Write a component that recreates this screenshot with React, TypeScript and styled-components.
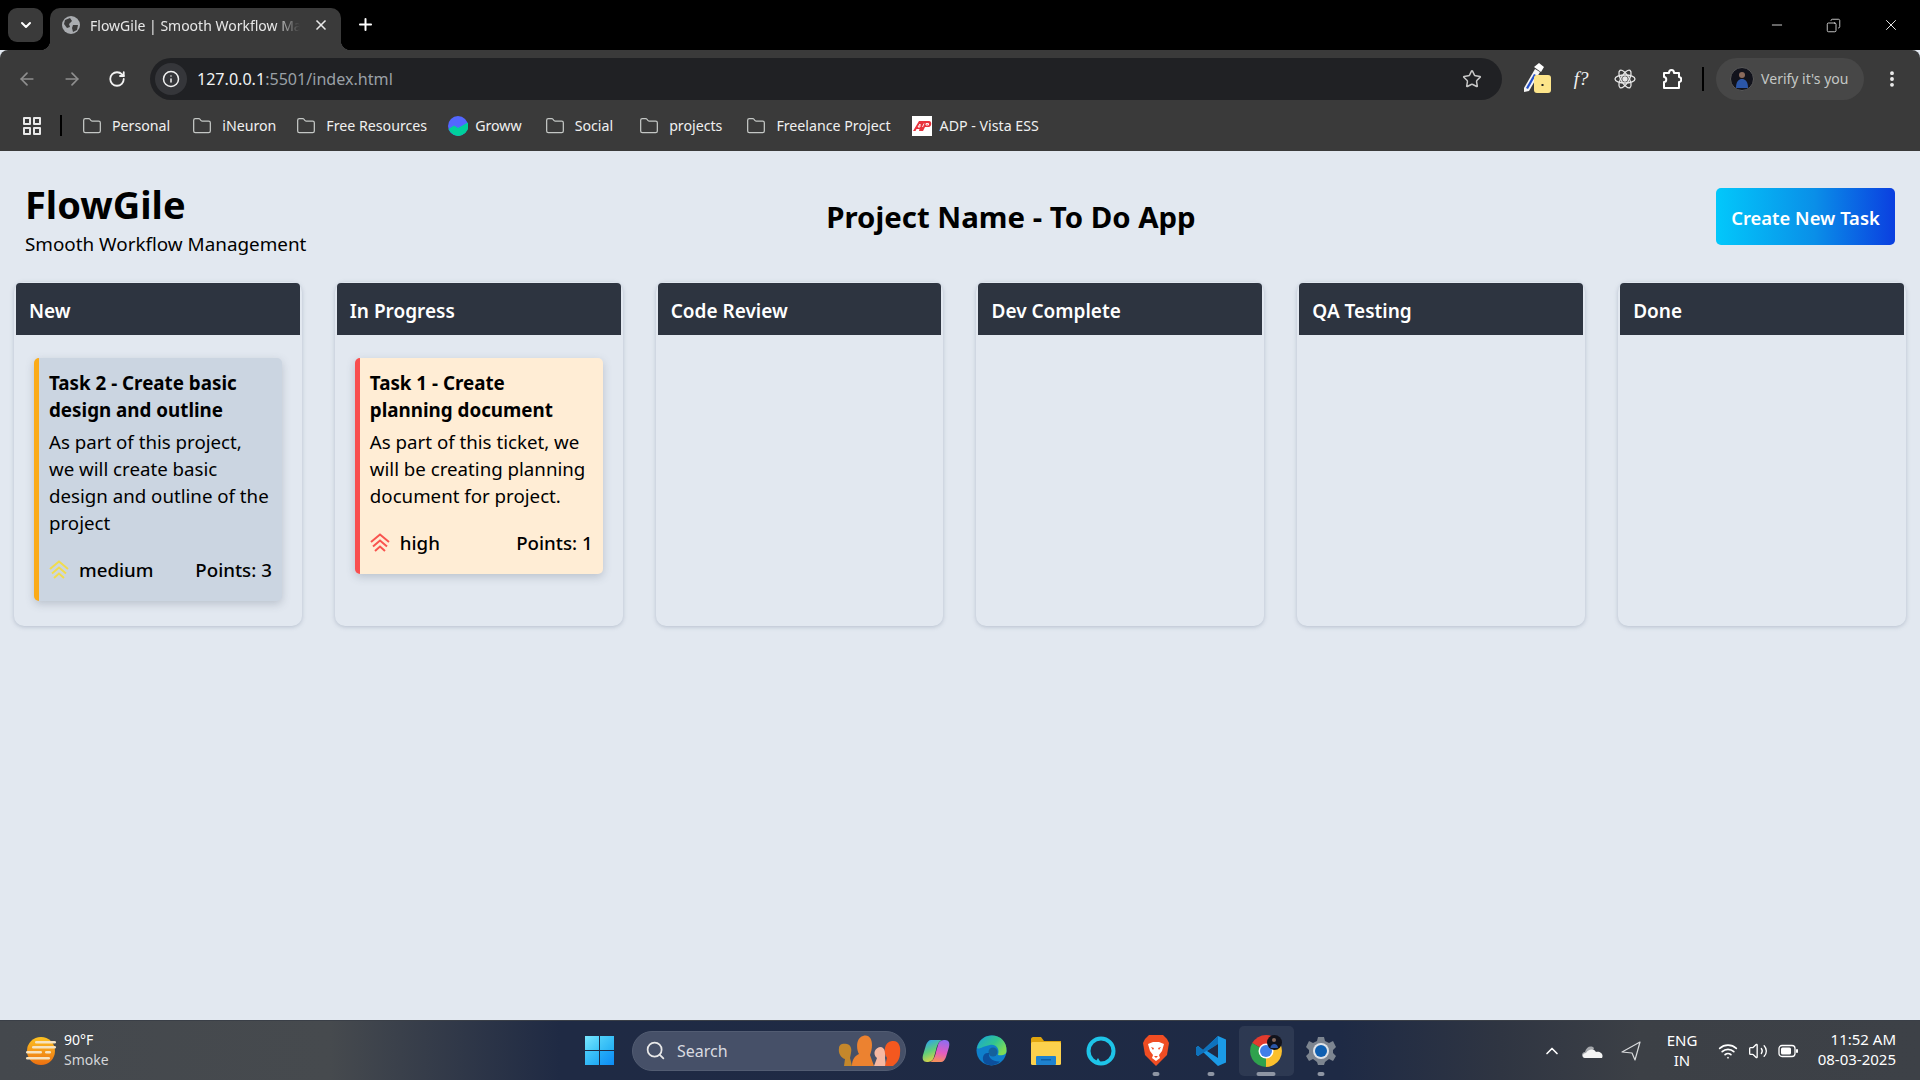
import {createGlobalStyle, styled} from 'styled-components';
import {
  ArrowLeft,
  ArrowRight,
  ChevronDown,
  ChevronUp,
  Copy,
  EllipsisVertical,
  Folder,
  Info,
  Minus,
  Plus,
  RotateCw,
  Search,
  Star,
  Volume2,
  Wifi,
  X,
} from 'lucide-react';

const GlobalStyle = createGlobalStyle`
  html, body {
    margin: 0;
    padding: 0;
    height: 100%;
    overflow: hidden;
    background: #e2e8f0;
    font-family: "Noto Sans", "Open Sans", sans-serif;
  }
  * { box-sizing: border-box; }
  h1, h2, h3, p { margin: 0; }
`;

const Screen = styled.div`
  width: 1920px;
  height: 1080px;
  display: flex;
  flex-direction: column;
`;

/* browser chrome */

const TabStrip = styled.div`
  height: 50px;
  background: #000;
  display: flex;
  align-items: flex-end;
  padding: 0 0 0 8px;
  color: #fff;
`;

const TabSearch = styled.div`
  width: 35px;
  height: 34px;
  margin-bottom: 8px;
  border-radius: 9px;
  background: #3a3a3a;
  display: flex;
  align-items: center;
  justify-content: center;
`;

const Tab = styled.div`
  position: relative;
  margin-left: 7px;
  width: 291px;
  height: 42px;
  background: #3a3a3a;
  border-radius: 10px 10px 0 0;
  display: flex;
  align-items: center;
  padding: 0 12px 8px 12px;
  font-size: 14px;
  color: #e8e8e8;

  &::before,
  &::after {
    content: '';
    position: absolute;
    bottom: 0;
    width: 10px;
    height: 10px;
  }
  &::before {
    left: -10px;
    background: radial-gradient(circle at 0 0, #000 10px, #3a3a3a 10.5px);
  }
  &::after {
    right: -10px;
    background: radial-gradient(circle at 100% 0, #000 10px, #3a3a3a 10.5px);
  }
`;

const TabTitle = styled.span`
  margin-left: 10px;
  width: 210px;
  white-space: nowrap;
  overflow: hidden;
  -webkit-mask-image: linear-gradient(to right, #000 88%, transparent 100%);
  mask-image: linear-gradient(to right, #000 88%, transparent 100%);
`;

const TabClose = styled.span`
  margin-left: auto;
  display: flex;
`;

const NewTab = styled.span`
  margin: 0 0 9px 15px;
  height: 34px;
  display: flex;
  align-items: center;
`;

const WindowControls = styled.div`
  margin-left: auto;
  height: 50px;
  display: flex;
  align-items: center;
  padding-right: 20px;
  gap: 41px;
`;

const Toolbar = styled.div`
  height: 50px;
  background: #3a3a3a;
  border-radius: 8px 8px 0 0;
  display: flex;
  align-items: flex-end;
  padding-left: 16px;
  color: #9a9a9a;
`;

const NavButton = styled.span<{$on?: boolean}>`
  width: 22px;
  height: 42px;
  margin-right: 23px;
  display: flex;
  align-items: center;
  justify-content: center;
  color: ${p => (p.$on ? '#f2f2f2' : '#8f8f8f')};
`;

const Omnibox = styled.div`
  margin-left: -1px;
  width: 1353px;
  height: 42px;
  background: #202124;
  border-radius: 21px;
  display: flex;
  align-items: center;
  padding: 0 20px 1px 5px;
  font-size: 16.1px;
  color: #9aa0a6;
`;

const SiteInfo = styled.span`
  width: 32px;
  height: 32px;
  border-radius: 50%;
  background: #35363a;
  color: #f1f1f1;
  display: flex;
  align-items: center;
  justify-content: center;
  margin-right: 10px;
`;

const Host = styled.span`
  color: #f1f3f4;
`;

const StarBox = styled.span`
  margin-left: auto;
  display: flex;
  color: #c7c7c7;
`;

const ExtensionTray = styled.div`
  height: 42px;
  display: flex;
  align-items: center;
  margin-left: 21px;
  color: #f1f1f1;
`;

const ExtIcon = styled.span<{$w: number}>`
  width: ${p => p.$w}px;
  display: flex;
  justify-content: center;
`;

const FormulaIcon = styled.span`
  font-family: "Liberation Serif", serif;
  font-style: italic;
  font-size: 19px;
`;

const MenuButton = styled(ExtIcon)`
  height: 42px;
  align-items: center;
`;

const TrayDivider = styled.span<{$h?: number}>`
  width: 2px;
  height: ${p => p.$h ?? 24}px;
  background: #000;
`;

const Profile = styled.div`
  margin-left: 12px;
  width: 148px;
  height: 42px;
  border-radius: 21px;
  background: #474747;
  display: flex;
  align-items: center;
  padding: 0 0 1px 14px;
  gap: 7px;
  font-size: 14px;
  color: #c4c7c5;
  white-space: nowrap;
`;

const BookmarkBar = styled.div`
  height: 51px;
  background: #3a3a3a;
  display: flex;
  align-items: center;
  padding-left: 23px;
  font-size: 14.2px;
  color: #f0f0f0;
  white-space: nowrap;
`;

const Bookmark = styled.span<{$gap?: number; $iconGap?: number}>`
  display: flex;
  align-items: center;
  gap: ${p => p.$iconGap ?? 10}px;
  margin-right: ${p => p.$gap ?? 23}px;
  color: #f0f0f0;
`;

const AppsIcon = styled.span`
  width: 18px;
  height: 18px;
  display: grid;
  grid-template-columns: 8px 8px;
  gap: 2px;
  margin-right: 19px;

  i {
    border: 2px solid #e8e8e8;
    border-radius: 1px;
  }
`;

const BookmarkDivider = styled(TrayDivider)`
  margin-right: 20px;
`;

/* page */

const Page = styled.main`
  flex: 1;
  background: #e2e8f0;
  color: #000;
  min-height: 0;
`;

const PageHeader = styled.header`
  height: 131px;
  display: grid;
  grid-template-columns: 1fr auto 1fr;
  align-items: start;
  padding: 29px 25px 0 25px;
`;

const Brand = styled.div`
  display: flex;
  flex-direction: column;
`;

const BrandName = styled.h1`
  font-size: 38px;
  line-height: 48px;
  font-weight: 700;
`;

const Tagline = styled.p`
  font-size: 18.85px;
  line-height: 26px;
  margin-top: 3px;
`;

const ProjectName = styled.h2`
  font-size: 29.4px;
  font-weight: 700;
  line-height: 40px;
  margin: 17px 0 0 102px;
`;

const CreateButton = styled.button`
  justify-self: end;
  margin-top: 8px;
  width: 179px;
  height: 57px;
  border: none;
  border-radius: 5px;
  padding: 1px 0 0;
  color: #fff;
  font-family: inherit;
  font-size: 18.4px;
  font-weight: 600;
  white-space: nowrap;
  background: linear-gradient(to right, #02c8fb, #0a8fe8 55%, #0b3fe0);
`;

const Board = styled.div`
  display: flex;
  gap: 33px;
  padding: 0 14px;
`;

const ColumnBox = styled.section`
  width: 288px;
  height: 344px;
  border-radius: 10px;
  padding: 1px 2px 0;
  background: #e2e8f0;
  box-shadow: 0 1px 4px rgba(100, 116, 139, 0.35);
`;

const ColumnTitle = styled.h3`
  height: 52px;
  background: #2d3440;
  color: #fff;
  border-radius: 4px 4px 0 0;
  font-size: 19px;
  font-weight: 600;
  line-height: 56px;
  padding-left: 13px;
`;

const CardList = styled.div`
  padding: 23px 18px 0;
`;

const Card = styled.article<{$tone: string; $edge: string}>`
  background: ${p => p.$tone};
  border-left: 5px solid ${p => p.$edge};
  border-radius: 5px;
  padding: 12px 10px 18px 10px;
  box-shadow: 0 3px 8px rgba(71, 85, 105, 0.25);
`;

const CardTitle = styled.h4`
  margin: 0;
  font-size: 18.8px;
  line-height: 27px;
  font-weight: 700;
  white-space: pre-line;
`;

const CardText = styled.p`
  margin-top: 4px;
  font-size: 18.7px;
  line-height: 27px;
  white-space: pre-line;
`;

const CardMeta = styled.div`
  margin-top: 20px;
  display: flex;
  align-items: center;
  justify-content: space-between;
  font-size: 18.7px;
  line-height: 27px;
  font-weight: 500;
`;

const Priority = styled.span`
  display: flex;
  align-items: center;
  gap: 10px;
`;

/* taskbar */

const Taskbar = styled.footer`
  height: 60px;
  display: flex;
  align-items: center;
  border-top: 1px solid #3a3f47;
  background: linear-gradient(
    to right,
    #44484d 0,
    #464a4e 330px,
    #1f2a44 560px,
    #1e2a45 1340px,
    #2f3542 1500px,
    #3c4046 1640px,
    #3d4147 100%
  );
  color: #fff;
`;

const Weather = styled.div`
  width: 585px;
  padding-left: 25px;
  display: flex;
  align-items: center;
  gap: 7px;
`;

const WeatherText = styled.div`
  font-size: 14px;
  line-height: 20px;
  color: #fff;
  margin-top: -1px;

  span {
    display: block;
    color: #d4d6d9;
  }
`;

const StartIcon = styled.span`
  width: 29px;
  height: 29px;
  display: grid;
  grid-template-columns: 1fr 1fr;
  gap: 1px;

  i:nth-child(1) { background: linear-gradient(135deg, #79e6ff, #3bc4f7); }
  i:nth-child(2) { background: linear-gradient(135deg, #4fd0fa, #24b0f4); }
  i:nth-child(3) { background: linear-gradient(135deg, #49caf9, #1fa8f4); }
  i:nth-child(4) { background: linear-gradient(135deg, #25adf6, #0e8cf5); }
`;

const SearchPill = styled.div`
  margin-left: 18px;
  width: 274px;
  height: 40px;
  border-radius: 20px;
  background: #465068;
  border: 1px solid #525c72;
  display: flex;
  align-items: center;
  padding-left: 12px;
  font-size: 16px;
  color: #d9dbe0;
  gap: 11px;
`;

const SearchArt = styled.span`
  margin-left: auto;
  display: flex;
  margin-right: 4px;
`;

const AppList = styled.div`
  margin-left: 2.5px;
  display: flex;
`;

const AppSlot = styled.span<{$active?: boolean}>`
  position: relative;
  width: 55px;
  height: 50px;
  display: flex;
  align-items: center;
  justify-content: center;
  border-radius: 5px;
  background: ${p => (p.$active ? 'rgba(255,255,255,0.07)' : 'transparent')};
`;

const RunDot = styled.i<{$active?: boolean}>`
  position: absolute;
  bottom: 0;
  left: 50%;
  transform: translateX(-50%);
  width: ${p => (p.$active ? 19 : 7)}px;
  height: 4px;
  border-radius: 2px;
  background: #8e95a3;
`;

const Tray = styled.div`
  margin-left: auto;
  display: flex;
  align-items: center;
  padding-right: 24px;
  color: #fff;
`;

const TrayIcon = styled.span<{$w: number}>`
  width: ${p => p.$w}px;
  display: flex;
  justify-content: center;
`;

const Lang = styled.div`
  width: 46px;
  margin: -2px 8px 0 9px;
  text-align: center;
  font-size: 15px;
  line-height: 20px;
`;

const Clock = styled.div`
  margin: -3px 0 0 1px;
  width: 92px;
  text-align: right;
  font-size: 15px;
  line-height: 20px;
`;

/* drawings */

const Chevrons = ({color}: {color: string}) => (
  <svg width="20" height="20" viewBox="0 0 20 20" fill="none" stroke={color} strokeWidth="2">
    <path d="M1 9 L10 1.5 L19 9" />
    <path d="M3 13.5 L10 7.5 L17 13.5" />
    <path d="M5 18 L10 13.5 L15 18" />
  </svg>
);

const GlobeIcon = () => (
  <svg width="18" height="18" viewBox="0 0 18 18">
    <circle cx="9" cy="9" r="9" fill="#a9acb0" />
    <path d="M3 4 L8 2 L10 5 L7 8 L8 11 L5 12 L2 8 Z M11 9 L16 9 L15 14 L11 16 L10 12 Z" fill="#3a3a3a" />
  </svg>
);

const GrowwIcon = () => (
  <svg width="20" height="20" viewBox="0 0 20 20">
    <circle cx="10" cy="10" r="10" fill="#5367ff" />
    <path d="M0.6 13 L6 9.5 L10 12 L19.8 6.5 A10 10 0 0 1 0.6 13 Z" fill="#00d09c" />
  </svg>
);

const AdpIcon = () => (
  <svg width="20" height="20" viewBox="0 0 20 20">
    <rect width="20" height="20" fill="#fff" />
    <path d="M1 15 L7 5 H17 C20 5 20 10 17 11 H13 L11 15 H7 L7.5 13 H4.5 L3.5 15 Z" fill="#e8323c" />
    <path d="M6 11 L8 8 V11 Z M12 7.5 L10.5 11 M14 7.5 H16.5 V9 H14 Z" stroke="#fff" strokeWidth="0.9" fill="none" />
  </svg>
);

const EyedropperIcon = () => (
  <svg width="30" height="34" viewBox="0 0 30 34">
    <path d="M1 26 L12 7 L17 10 L6 29 L1 30 Z" fill="#f5f5f5" />
    <path d="M3 26 L11 12 L13 13 L5 27 Z" fill="#2450c8" />
    <path d="M11 5 L16 1 L21 5 L18 10 Z" fill="#fff" />
    <rect x="11" y="13" width="17" height="18" rx="3" fill="#fde58a" />
    <rect x="18.5" y="22" width="2" height="2" fill="#222" />
  </svg>
);

const ReactAtom = () => (
  <svg width="22" height="22" viewBox="0 0 22 22" fill="none" stroke="#e8e8e8" strokeWidth="1.3">
    <ellipse cx="11" cy="11" rx="10" ry="4" />
    <ellipse cx="11" cy="11" rx="10" ry="4" transform="rotate(60 11 11)" />
    <ellipse cx="11" cy="11" rx="10" ry="4" transform="rotate(120 11 11)" />
    <circle cx="11" cy="11" r="2" fill="#e8e8e8" />
  </svg>
);

const PuzzleIcon = () => (
  <svg width="20" height="22" viewBox="0 0 20 22" fill="none" stroke="#fff" strokeWidth="2" strokeLinejoin="round">
    <path d="M2 5 H7 C7 1 12 1 12 5 H17 V9 C20 9 20 14 17 14 V20 H2 V14 C5 14 5 9 2 9 Z" />
  </svg>
);

const Avatar = ({size}: {size: number}) => (
  <svg width={size} height={size} viewBox="0 0 24 24">
    <circle cx="12" cy="12" r="11.5" fill="#12131c" stroke="#5a5a5a" />
    <circle cx="12" cy="8" r="3" fill="#8a6a5c" />
    <path d="M6 21 C6 14 9 12 12 12 C15 12 18 14 18 21 Z" fill="#2b56a8" />
  </svg>
);

const FlippedCopy = styled(Copy)`
  transform: scaleX(-1);
`;

const SunHaze = () => (
  <svg width="32" height="32" viewBox="0 0 32 32">
    <defs>
      <linearGradient id="hz" x1="0" y1="0" x2="0" y2="1">
        <stop offset="0" stopColor="#fdc221" />
        <stop offset="1" stopColor="#ec7011" />
      </linearGradient>
    </defs>
    <circle cx="16" cy="16" r="14" fill="url(#hz)" />
    <g fill="#f6e3c0">
      <rect x="10" y="6" width="21" height="2.6" rx="1.3" />
      <rect x="7" y="11" width="24" height="2.6" rx="1.3" />
      <rect x="1" y="16" width="16" height="2.6" rx="1.3" />
      <rect x="20" y="16" width="6" height="2.6" rx="1.3" />
      <rect x="1" y="22" width="24" height="2.6" rx="1.3" />
    </g>
  </svg>
);

const People = () => (
  <svg width="63" height="32" viewBox="0 0 63 32">
    <path d="M1 13 C1 9 5 8 9 9 C13 10 14 14 13 18 L12 23 L14 31 H6 L7 24 C3 23 0 18 1 13 Z" fill="#c4872b" />
    <path d="M14 31 C14 24 17 21 21 19 C18 14 18 3 25 1 C31 -1 34 4 34 10 C34 14 33 17 32 20 L36 31 Z" fill="#ec8230" />
    <path d="M36 31 L39 23 C34 19 37 12 43 12 C47 13 48 18 47 23 L48 31 Z" fill="#f6b8a2" />
    <path d="M47 31 L49 23 C45 17 46 7 54 6 C61 5 63 12 62 18 C62 24 59 28 55 31 Z" fill="#f4581f" />
  </svg>
);

const CopilotIcon = () => (
  <svg width="28" height="28" viewBox="0 0 28 28">
    <defs>
      <linearGradient id="cpa" x1="0.2" y1="0" x2="0.6" y2="1">
        <stop offset="0" stopColor="#2b9ff0" />
        <stop offset="0.5" stopColor="#5fcf7a" />
        <stop offset="1" stopColor="#f4d33e" />
      </linearGradient>
      <linearGradient id="cpb" x1="0.6" y1="0" x2="0.4" y2="1">
        <stop offset="0" stopColor="#8f6df0" />
        <stop offset="0.55" stopColor="#e35cc1" />
        <stop offset="1" stopColor="#f6905a" />
      </linearGradient>
    </defs>
    <path d="M9 3 H20 C17 4 15 8 14 13 L12 20 C11 24 8 25 5 25 C1 25 0 22 1 18 L4 8 C5 5 7 3 9 3 Z" fill="url(#cpa)" />
    <path d="M19 25 H8 C11 24 13 20 14 15 L16 8 C17 4 20 3 23 3 C27 3 28 6 27 10 L24 20 C23 23 21 25 19 25 Z" fill="url(#cpb)" />
  </svg>
);

const EdgeIcon = () => (
  <svg width="31" height="31" viewBox="0 0 31 31">
    <defs>
      <linearGradient id="eda" x1="0" y1="0" x2="1" y2="0.6">
        <stop offset="0" stopColor="#1aa3d8" />
        <stop offset="0.6" stopColor="#32c58f" />
        <stop offset="1" stopColor="#7fdc56" />
      </linearGradient>
    </defs>
    <circle cx="15.5" cy="15.5" r="15" fill="#0f7fcb" />
    <path d="M1 13 C3 4 10 0.5 16 0.5 C25 0.5 31 7 30.5 16 C30.5 20 26 21 22 20 C24 14 20 9 14 10 C7 11 3 15 1 13 Z" fill="url(#eda)" />
    <path d="M13 18 C12 23 17 27 24 26.5 C20 30.5 14 31 10 29 C5 26 6 17 13 18 Z" fill="#0c4f9c" />
    <circle cx="17" cy="17" r="4.5" fill="#1f2a45" opacity="0.35" />
  </svg>
);

const FilesIcon = () => (
  <svg width="30" height="28" viewBox="0 0 30 28">
    <path d="M0 2 C0 1 1 0 2 0 H10 L13 4 H30 V10 H0 Z" fill="#e0a50e" />
    <rect y="5" width="30" height="23" rx="1.5" fill="#fcd14d" />
    <rect x="5" y="19" width="20" height="9" rx="1" fill="#1e82cf" />
    <rect x="10" y="22" width="10" height="1.5" fill="#0e5fa6" />
  </svg>
);

const AlexaIcon = () => (
  <svg width="30" height="30" viewBox="0 0 30 30" fill="none">
    <circle cx="15" cy="15" r="12.5" stroke="#1ec4e8" strokeWidth="4" />
    <path d="M8 28 L12 22 L15 27 Z" fill="#1ec4e8" />
  </svg>
);

const BraveIcon = () => (
  <svg width="26" height="31" viewBox="0 0 26 31">
    <path d="M6 0 H20 L24 4 L26 8 L24 20 L17 27 L13 31 L9 27 L2 20 L0 8 L2 4 Z" fill="#f04d23" />
    <path d="M5 9 L10 7 H16 L21 9 L19 16 L16 20 L17 23 L13 26 L9 23 L10 20 L7 16 Z" fill="#fff" />
    <path d="M8 12 L11 13 L10 15 Z M18 12 L15 13 L16 15 Z M11 21 H15 L13 23 Z" fill="#f04d23" />
  </svg>
);

const VsCodeIcon = () => (
  <svg width="30" height="30" viewBox="0 0 30 30">
    <path d="M22 0 L30 3.5 V26.5 L22 30 L7 16 L2 20 L0 18.5 V11.5 L2 10 L7 14 Z" fill="#1b9ae6" />
    <path d="M22 0 L7 14 L2 10 L0 11.5 V18.5 L2 20 L22 8 Z" fill="#0e72bd" />
    <path d="M22 8 V22 L11 15 Z" fill="#1f2a45" />
  </svg>
);

const ChromeIcon = () => (
  <svg width="32" height="32" viewBox="0 0 32 32">
    <path d="M16 16 L2.2 8 A16 16 0 0 1 29.8 8 Z" fill="#e33b2e" />
    <path d="M16 16 L29.8 8 A16 16 0 0 1 16 32 Z" fill="#fbc02d" />
    <path d="M16 16 L16 32 A16 16 0 0 1 2.2 8 Z" fill="#2fa24d" />
    <circle cx="16" cy="16" r="7.5" fill="#fff" />
    <circle cx="16" cy="16" r="6" fill="#3f7fe8" />
    <circle cx="24.5" cy="7.5" r="7.5" fill="#12131c" />
    <circle cx="24" cy="5" r="2" fill="#8a6a5c" />
    <path d="M20.5 13 C20.5 7.5 28 7.5 28 13 Z" fill="#2b56a8" />
  </svg>
);

const GearIcon = () => (
  <svg width="30" height="30" viewBox="0 0 30 30">
    <path
      d="M12 1 H18 L19 5 L23 7 L27 5 L30 11 L27 14 V17 L30 20 L27 25 L23 23 L19 26 L18 29 H12 L11 26 L7 23 L3 25 L0 20 L3 17 V14 L0 11 L3 5 L7 7 L11 5 Z"
      fill="#7d8590"
    />
    <circle cx="15" cy="15" r="8" fill="#dfe3e8" />
    <circle cx="15" cy="15" r="6" fill="#0f5fb0" />
  </svg>
);

const CloudIcon = () => (
  <svg width="22" height="14" viewBox="0 0 22 14">
    <path d="M4 14 C0 14 0 8 4 8 C5 3 10 1 13 4 L9 14 Z" fill="#a5a8ac" />
    <path d="M4 14 C1 14 1 9 5 9 C7 5 13 4 15 8 C19 7 23 10 21 14 Z" fill="#f4f4f4" />
  </svg>
);

const LocationIcon = () => (
  <svg width="20" height="20" viewBox="0 0 20 20" fill="none" stroke="#d8dadc" strokeWidth="1.2" strokeLinejoin="round">
    <path d="M19 1 L1 11 L11 12 L14 19 Z" />
  </svg>
);

const BatteryIcon = () => (
  <svg width="20" height="14" viewBox="0 0 20 14" fill="none">
    <rect x="1" y="1.5" width="16" height="11" rx="3" stroke="#fff" strokeWidth="1.3" />
    <rect x="3" y="3.5" width="10" height="7" rx="1.5" fill="#fff" />
    <rect x="18" y="5" width="2" height="4" rx="1" fill="#fff" />
  </svg>
);

type Task = {
  title: string;
  text: string;
  priority: string;
  points: number;
  tone: string;
  edge: string;
  chevron: string;
};

const columns: {name: string; tasks: Task[]}[] = [
  {
    name: 'New',
    tasks: [
      {
        title: 'Task 2 - Create basic\ndesign and outline',
        text: 'As part of this project,\nwe will create basic\ndesign and outline of the\nproject',
        priority: 'medium',
        points: 3,
        tone: '#cbd5e1',
        edge: '#fbab18',
        chevron: '#f1dc4d',
      },
    ],
  },
  {
    name: 'In Progress',
    tasks: [
      {
        title: 'Task 1 - Create\nplanning document',
        text: 'As part of this ticket, we\nwill be creating planning\ndocument for project.',
        priority: 'high',
        points: 1,
        tone: '#ffedd5',
        edge: '#f94f4f',
        chevron: '#f9544f',
      },
    ],
  },
  {name: 'Code Review', tasks: []},
  {name: 'Dev Complete', tasks: []},
  {name: 'QA Testing', tasks: []},
  {name: 'Done', tasks: []},
];

const bookmarks: {label: string; gap?: number}[] = [
  {label: 'Personal', gap: 22},
  {label: 'iNeuron', gap: 20},
  {label: 'Free Resources', gap: 21},
];

const laterBookmarks: {label: string; gap?: number}[] = [
  {label: 'Social', gap: 26},
  {label: 'projects', gap: 24},
  {label: 'Freelance Project', gap: 21},
];

function App() {
  return (
    <Screen>
      <GlobalStyle />

      <TabStrip>
        <TabSearch>
          <ChevronDown size={16} strokeWidth={3} />
        </TabSearch>
        <Tab>
          <GlobeIcon />
          <TabTitle>FlowGile | Smooth Workflow Management</TabTitle>
          <TabClose>
            <X size={16} strokeWidth={2.5} />
          </TabClose>
        </Tab>
        <NewTab>
          <Plus size={19} strokeWidth={2.5} />
        </NewTab>
        <WindowControls>
          <Minus size={16} strokeWidth={1.2} />
          <FlippedCopy size={15} strokeWidth={1.2} />
          <X size={18} strokeWidth={1.2} />
        </WindowControls>
      </TabStrip>

      <Toolbar>
        <NavButton>
          <ArrowLeft size={20} />
        </NavButton>
        <NavButton>
          <ArrowRight size={20} />
        </NavButton>
        <NavButton $on>
          <RotateCw size={18} strokeWidth={2.4} />
        </NavButton>
        <Omnibox>
          <SiteInfo>
            <Info size={18} />
          </SiteInfo>
          <Host>127.0.0.1</Host>:5501/index.html
          <StarBox>
            <Star size={20} strokeWidth={1.8} />
          </StarBox>
        </Omnibox>
        <ExtensionTray>
          <ExtIcon $w={30}>
            <EyedropperIcon />
          </ExtIcon>
          <ExtIcon $w={56}>
            <FormulaIcon>f?</FormulaIcon>
          </ExtIcon>
          <ExtIcon $w={32}>
            <ReactAtom />
          </ExtIcon>
          <ExtIcon $w={61}>
            <PuzzleIcon />
          </ExtIcon>
          <TrayDivider />
        </ExtensionTray>
        <Profile>
          <Avatar size={24} />
          Verify it's you
        </Profile>
        <MenuButton $w={56}>
          <EllipsisVertical size={20} color="#f1f1f1" strokeWidth={2.6} />
        </MenuButton>
      </Toolbar>

      <BookmarkBar>
        <AppsIcon>
          <i />
          <i />
          <i />
          <i />
        </AppsIcon>
        <BookmarkDivider $h={21} />
        {bookmarks.map(b => (
          <Bookmark key={b.label} $gap={b.gap}>
            <Folder size={20} strokeWidth={1.5} color="#c4c7c5" />
            {b.label}
          </Bookmark>
        ))}
        <Bookmark $iconGap={7}>
          <GrowwIcon />
          Groww
        </Bookmark>
        {laterBookmarks.map(b => (
          <Bookmark key={b.label} $gap={b.gap}>
            <Folder size={20} strokeWidth={1.5} color="#c4c7c5" />
            {b.label}
          </Bookmark>
        ))}
        <Bookmark $iconGap={8}>
          <AdpIcon />
          ADP - Vista ESS
        </Bookmark>
      </BookmarkBar>

      <Page>
        <PageHeader>
          <Brand>
            <BrandName>FlowGile</BrandName>
            <Tagline>Smooth Workflow Management</Tagline>
          </Brand>
          <ProjectName>Project Name - To Do App</ProjectName>
          <CreateButton>Create New Task</CreateButton>
        </PageHeader>
        <Board>
          {columns.map(col => (
            <ColumnBox key={col.name}>
              <ColumnTitle>{col.name}</ColumnTitle>
              <CardList>
                {col.tasks.map(task => (
                  <Card key={task.title} $tone={task.tone} $edge={task.edge}>
                    <CardTitle>{task.title}</CardTitle>
                    <CardText>{task.text}</CardText>
                    <CardMeta>
                      <Priority>
                        <Chevrons color={task.chevron} />
                        {task.priority}
                      </Priority>
                      <span>Points: {task.points}</span>
                    </CardMeta>
                  </Card>
                ))}
              </CardList>
            </ColumnBox>
          ))}
        </Board>
      </Page>

      <Taskbar>
        <Weather>
          <SunHaze />
          <WeatherText>
            90°F
            <span>Smoke</span>
          </WeatherText>
        </Weather>
        <StartIcon>
          <i />
          <i />
          <i />
          <i />
        </StartIcon>
        <SearchPill>
          <Search size={21} color="#e8e8e8" />
          Search
          <SearchArt>
            <People />
          </SearchArt>
        </SearchPill>
        <AppList>
          <AppSlot>
            <CopilotIcon />
          </AppSlot>
          <AppSlot>
            <EdgeIcon />
          </AppSlot>
          <AppSlot>
            <FilesIcon />
          </AppSlot>
          <AppSlot>
            <AlexaIcon />
          </AppSlot>
          <AppSlot>
            <BraveIcon />
            <RunDot />
          </AppSlot>
          <AppSlot>
            <VsCodeIcon />
            <RunDot />
          </AppSlot>
          <AppSlot $active>
            <ChromeIcon />
            <RunDot $active />
          </AppSlot>
          <AppSlot>
            <GearIcon />
            <RunDot />
          </AppSlot>
        </AppList>
        <Tray>
          <TrayIcon $w={40}>
            <ChevronUp size={20} />
          </TrayIcon>
          <TrayIcon $w={40}>
            <CloudIcon />
          </TrayIcon>
          <TrayIcon $w={38}>
            <LocationIcon />
          </TrayIcon>
          <Lang>
            ENG
            <br />
            IN
          </Lang>
          <TrayIcon $w={30}>
            <Wifi size={20} />
          </TrayIcon>
          <TrayIcon $w={30}>
            <Volume2 size={20} strokeWidth={1.6} />
          </TrayIcon>
          <TrayIcon $w={30}>
            <BatteryIcon />
          </TrayIcon>
          <Clock>
            11:52 AM
            <br />
            08-03-2025
          </Clock>
        </Tray>
      </Taskbar>
    </Screen>
  );
}

export default App;
